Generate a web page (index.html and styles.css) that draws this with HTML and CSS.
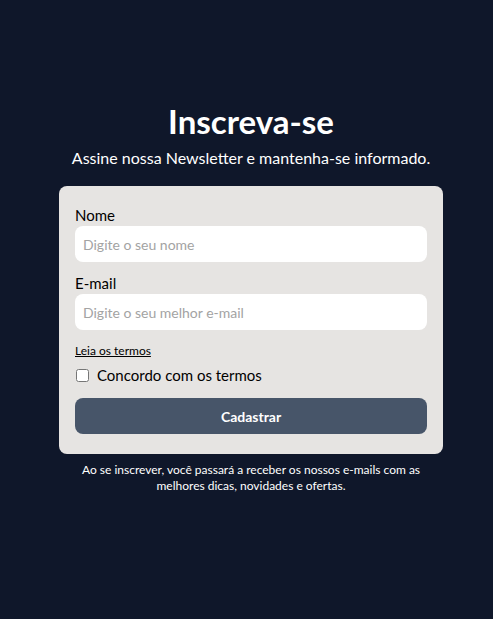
FILE: index.html
```html
<!DOCTYPE html>
<html lang="pt-BR">
<head>
<meta charset="utf-8">
<title>Inscreva-se</title>
<link rel="stylesheet" href="styles.css">
</head>
<body>
<main class="page">
  <h1 class="title">Inscreva-se</h1>
  <p class="subtitle">Assine nossa Newsletter e mantenha-se informado.</p>
  <form class="card">
    <label class="label" for="nome">Nome</label>
    <input class="input" id="nome" type="text" placeholder="Digite o seu nome">
    <label class="label label-gap" for="email">E-mail</label>
    <input class="input" id="email" type="email" placeholder="Digite o seu melhor e-mail">
    <a class="terms" href="#">Leia os termos</a>
    <label class="check-row"><input class="check" type="checkbox"><span>Concordo com os termos</span></label>
    <button class="btn" type="button">Cadastrar</button>
  </form>
  <p class="note">Ao se inscrever, você passará a receber os nossos e-mails com as melhores dicas, novidades e ofertas.</p>
</main>
</body>
</html>
```
FILE: styles.css
```css
* { box-sizing: border-box; }
html, body { margin: 0; padding: 0; }
body {
  background: #0f172a;
  font-family: Lato, "Noto Sans", sans-serif;
  color: #000;
  min-height: 100vh;
}
.page {
  display: flex;
  flex-direction: column;
  align-items: center;
  padding-top: 101px;
  padding-left: 9px;
}
.title {
  margin: 0;
  color: #fff;
  font-size: 33px;
  line-height: 40px;
  font-weight: 700;
}
.subtitle {
  margin: 7px 0 0;
  color: #fff;
  font-size: 16px;
  line-height: 20px;
}
.card {
  margin-top: 18px;
  width: 384px;
  background: #e6e4e2;
  border-radius: 8px;
  padding: 18px 16px 20px;
  display: flex;
  flex-direction: column;
}
.label {
  font-size: 15px;
  line-height: 22px;
  color: #000;
}
.label-gap { margin-top: 10px; }
.input {
  height: 36px;
  border: none;
  border-radius: 8px;
  background: #fff;
  padding: 0 8px;
  font-family: inherit;
  font-size: 14px;
  color: #000;
  outline: none;
}
.input::placeholder { color: #a3a3a3; }
.terms {
  margin-top: 12px;
  font-size: 12px;
  line-height: 18px;
  color: #000;
  text-decoration: underline;
  align-self: flex-start;
}
.check-row {
  margin-top: 4px;
  display: flex;
  align-items: center;
  gap: 8px;
  font-size: 15px;
  line-height: 22px;
}
.check {
  margin: 0 0 0 1px;
  width: 13px;
  height: 13px;
}
.btn {
  margin-top: 12px;
  height: 36px;
  border: none;
  border-radius: 8px;
  background: #475569;
  color: #fff;
  font-family: inherit;
  font-size: 14px;
  font-weight: 700;
}
.note {
  margin: 8px 0 0;
  width: 384px;
  text-align: center;
  color: #fff;
  font-size: 12px;
  line-height: 16px;
}
```
